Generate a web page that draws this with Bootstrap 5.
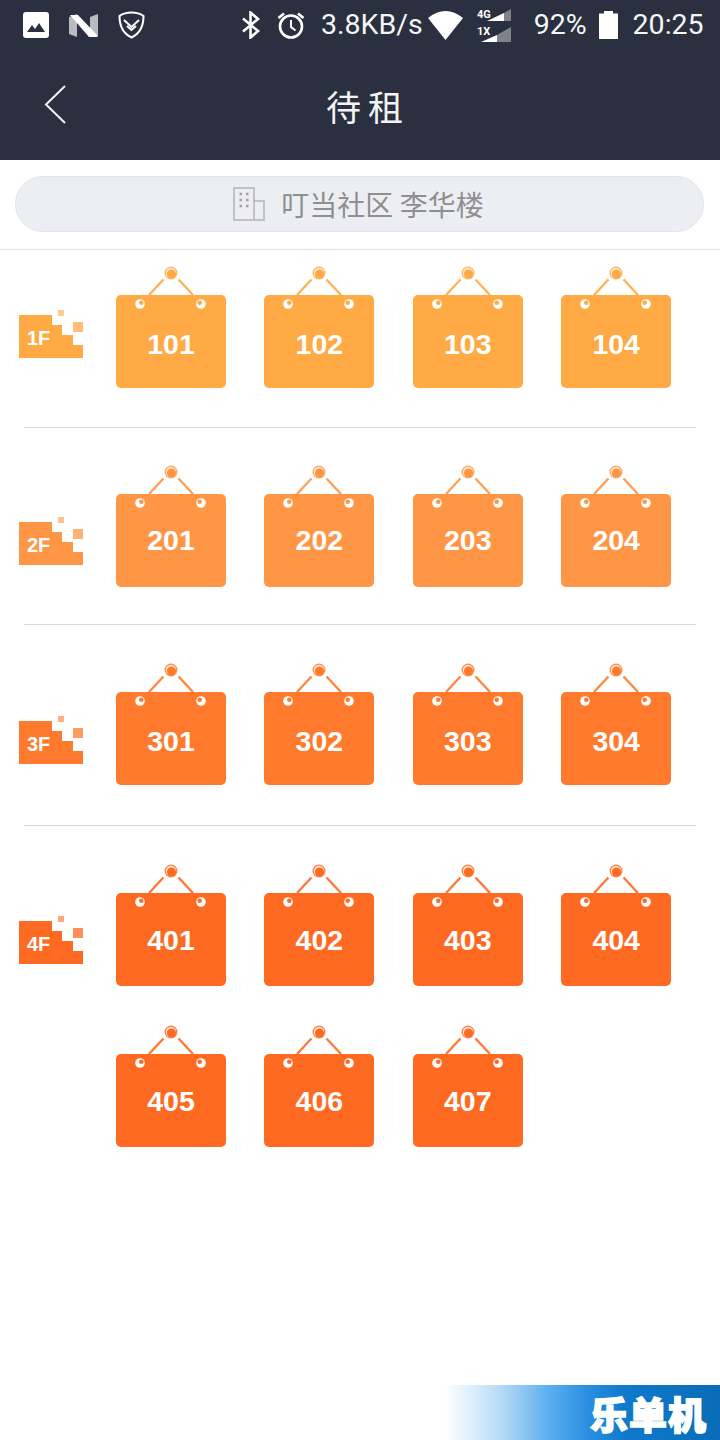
<!DOCTYPE html>
<html lang="zh">
<head>
<meta charset="utf-8">
<title>待租</title>
<link href="https://cdn.jsdelivr.net/npm/bootstrap@5.3.0/dist/css/bootstrap.min.css" rel="stylesheet">
<style>
html,body{margin:0;background:#fff}
.screen{width:720px;height:1440px;overflow:hidden;font-family:"Liberation Sans","Noto Sans CJK SC",sans-serif}
.topbar{height:160px;background:#2a3040;color:#fff}
.statusrow{height:50px;padding-left:23px;font-family:Roboto,sans-serif;font-size:28.5px;line-height:50px;color:#f6f6f6}
.statusrow svg{flex:none;display:block}
.s1{margin-left:20px}.s2{margin-left:20px}.s3{margin-left:96px}.s4{margin-left:16px}.s5{margin-left:16px}.s6{margin-left:5px}.s7{margin-left:14px}.s8{margin-left:22px}.s9{margin-left:12px}.s10{margin-left:15px}
.titlerow{height:110px}
.backbtn{margin-left:44px;margin-top:35px;display:block}
.pagetitle{position:absolute;left:0;right:0;top:78px;margin:0;padding-left:16px;text-align:center;font-family:"Noto Sans CJK SC",sans-serif;font-size:35px;line-height:56px;font-weight:400;letter-spacing:7px;color:#f4f4f4}
.searchwrap{height:90px;padding:16px 16px 0 15px;border-bottom:1px solid #e2e2e2}
.searchpill{height:56px;background:#eceef2;border:1px solid #e2e4e8;border-radius:28px;font-family:"Noto Sans CJK SC",sans-serif;font-size:28px;color:#8f8f92;padding-right:2px}
.searchpill svg{margin-right:16px}
.floorrow{margin:0 24px 0 19px;display:flex;align-items:flex-start}
.rule{height:1px;background:#d9d9d9;margin:0 24px}
.f1{padding:16px 0 39px;color:#ffaa45}
.f2{padding:37px 0 37px;color:#ff9646}
.f3{padding:38px 0 40px;color:#ff7a2c}
.f4{padding:38px 0 0;color:#ff6a23}
.flooricon{display:block;flex:none;margin-right:33px}
.f1 .flooricon{margin-top:44px}
.f2 .flooricon{margin-top:52px}
.f3 .flooricon{margin-top:53px}
.f4 .flooricon{margin-top:52px}
.taggrid{display:flex;flex-wrap:wrap;column-gap:38.4px;row-gap:39px;width:560px}
.roomtag{position:relative;width:110px;height:122px}
.roomtag svg{position:absolute;left:0;top:0}
.tagbody{margin-top:29px;height:93px;width:110px;display:inline-flex;background:currentColor;border-radius:5px;align-items:center;justify-content:center;vertical-align:top}
.tagnum{color:#fff;font-size:28.500px;font-weight:700;line-height:32px;padding-top:5px}
.f2 .tagnum{padding-top:0;padding-bottom:1px}
.f3 .tagnum{padding-top:4px}
.f4 .tagnum{padding-top:1px}
.floorlabel{font-family:"Liberation Sans",sans-serif;font-size:20px;font-weight:700;fill:#fff}
.watermark{height:55px;width:275px;background:linear-gradient(90deg,#fff 0%,#b8dcf7 20%,#5aaeee 38%,#2a8fe0 52%,#0f7acb 65%,#0a6cb8 100%);color:#fff;font-family:"Noto Sans CJK SC",sans-serif;font-weight:900;font-size:38px;line-height:55px;letter-spacing:1px;text-align:right;padding-right:13px;-webkit-text-stroke:1.5px #fff}
</style>
</head>
<body>
<svg width="0" height="0" class="d-block" aria-hidden="true">
<defs>
<symbol id="hang" viewBox="0 0 110 122">
<path d="M33 29 47.500 13.500M62.500 13.500 77 29" fill="none" stroke="currentColor" stroke-width="2.400" opacity=".9"/>
<circle cx="55" cy="7" r="6.500" fill="currentColor" opacity=".85"/>
<circle cx="55" cy="7" r="5.200" fill="#ffe9d2"/>
<circle cx="55.500" cy="8" r="4.600" fill="currentColor"/>
<circle cx="24" cy="38" r="4.800" fill="#fff"/><circle cx="25.300" cy="36.800" r="2.300" fill="currentColor"/>
<circle cx="85" cy="38" r="4.800" fill="#fff"/><circle cx="83.700" cy="36.800" r="2.300" fill="currentColor"/>
</symbol>
<symbol id="stairs" viewBox="0 0 64 48">
<path d="M0 5H33V15H43V25H54V35H64V48H0z" fill="currentColor"/>
<rect x="39" y="0" width="6" height="6" fill="currentColor" opacity=".6"/>
<rect x="54" y="12" width="10" height="10" fill="currentColor" opacity=".75"/>
</symbol>
</defs>
</svg>
<div class="screen d-flex flex-column">
  <header class="topbar position-relative">
    <div class="statusrow d-flex align-items-center">
      <svg width="26" height="26" viewBox="0 0 26 26"><rect width="26" height="26" rx="3" fill="#fff"/><path d="M4 20 9 13l3 4 4-6 6 9z" fill="#2a3040"/></svg>
      <svg class="s1" width="29" height="24" viewBox="0 0 29 24"><path d="M0 4 8 1V24L0 21z" fill="#b9bbbe"/><path d="M21 4 29 1V24L21 21z" fill="#b9bbbe"/><path d="M1 2H9L28 22V24H20z" fill="#fff"/></svg>
      <svg class="s2" width="27" height="28" viewBox="0 0 27 28"><path d="M13.500 1.500C9 1.500 5 2.500 1.500 5 1.500 15 5 22.500 13.500 26.500 22 22.500 25.500 15 25.500 5 22 2.500 18 1.500 13.500 1.500z" fill="none" stroke="#fff" stroke-width="2"/><path d="M6 9 13.500 16 21 9M9 15l4.500 4 4.500-4" fill="none" stroke="#fff" stroke-width="2"/></svg>
      <svg class="s3" width="20" height="28" viewBox="0 0 20 28"><path d="M2 7.500 17 20 9.500 26.500V1.500L17 8 2 20.500" fill="none" stroke="#fff" stroke-width="2.600"/></svg>
      <svg class="s4" width="28" height="28" viewBox="0 0 28 28"><circle cx="14" cy="15.500" r="11" fill="none" stroke="#fff" stroke-width="2.600"/><path d="M14 9v7l4.500 3.500" fill="none" stroke="#fff" stroke-width="2"/><path d="M1.500 7 7 2.500M26.500 7 21 2.500" stroke="#fff" stroke-width="2.600" fill="none"/></svg>
      <span class="s5">3.8KB/s</span>
      <svg class="s6" width="35" height="29" viewBox="0 0 35 29"><path d="M0 7Q17.500-7 35 7L17.500 29z" fill="#fff"/></svg>
      <svg class="s7" width="35" height="33" viewBox="0 0 35 33"><path d="M27 4 34 0V12H27z" fill="#fff" opacity=".4"/><path d="M10 12 27 4V12z" fill="#fff"/><path d="M20 26 34 18V33H20z" fill="#fff" opacity=".4"/><path d="M4 33 20 26V33z" fill="#fff"/><text x="0" y="9" font-family="Roboto,sans-serif" font-size="11" font-weight="700" fill="#fff">4G</text><text x="0" y="26" font-family="Roboto,sans-serif" font-size="11" font-weight="700" fill="#fff">1X</text></svg>
      <span class="s8">92%</span>
      <svg class="s9" width="19" height="28" viewBox="0 0 19 28"><path d="M5 0H14V2.500H19V28H0V2.500H5z" fill="#fff"/></svg>
      <span class="s10">20:25</span>
    </div>
    <div class="titlerow">
      <svg class="backbtn" width="22" height="40" viewBox="0 0 22 40"><path d="M21 1 2 19.500 21 38" fill="none" stroke="#f4f4f4" stroke-width="2"/></svg>
    </div>
    <h1 class="pagetitle">待租</h1>
  </header>
  <div class="searchwrap">
    <div class="searchpill d-flex align-items-center justify-content-center">
      <svg width="32" height="34" viewBox="0 0 32 34"><path d="M1 1H21V33H1zM21 14H31V33H21z" fill="none" stroke="#b4b4b6" stroke-width="1.500"/><path d="M6.500 7h2.500M13 7h2.500M6.500 13h2.500M13 13h2.500M6.500 19h2.500M13 19h2.500" stroke="#a0a0a2" stroke-width="2.500"/></svg>
      <span>叮当社区 李华楼</span>
    </div>
  </div>
  <section class="floorrow f1">
    <svg class="flooricon" width="64" height="48" viewBox="0 0 64 48"><use href="#stairs"/><text class="floorlabel" x="8" y="35">1F</text></svg>
    <div class="taggrid">
      <div class="roomtag"><div class="tagbody"><span class="tagnum">101</span></div><svg width="110" height="122"><use href="#hang"/></svg></div>
      <div class="roomtag"><div class="tagbody"><span class="tagnum">102</span></div><svg width="110" height="122"><use href="#hang"/></svg></div>
      <div class="roomtag"><div class="tagbody"><span class="tagnum">103</span></div><svg width="110" height="122"><use href="#hang"/></svg></div>
      <div class="roomtag"><div class="tagbody"><span class="tagnum">104</span></div><svg width="110" height="122"><use href="#hang"/></svg></div>
    </div>
  </section>
  <div class="rule"></div>
  <section class="floorrow f2">
    <svg class="flooricon" width="64" height="48" viewBox="0 0 64 48"><use href="#stairs"/><text class="floorlabel" x="8" y="35">2F</text></svg>
    <div class="taggrid">
      <div class="roomtag"><div class="tagbody"><span class="tagnum">201</span></div><svg width="110" height="122"><use href="#hang"/></svg></div>
      <div class="roomtag"><div class="tagbody"><span class="tagnum">202</span></div><svg width="110" height="122"><use href="#hang"/></svg></div>
      <div class="roomtag"><div class="tagbody"><span class="tagnum">203</span></div><svg width="110" height="122"><use href="#hang"/></svg></div>
      <div class="roomtag"><div class="tagbody"><span class="tagnum">204</span></div><svg width="110" height="122"><use href="#hang"/></svg></div>
    </div>
  </section>
  <div class="rule"></div>
  <section class="floorrow f3">
    <svg class="flooricon" width="64" height="48" viewBox="0 0 64 48"><use href="#stairs"/><text class="floorlabel" x="8" y="35">3F</text></svg>
    <div class="taggrid">
      <div class="roomtag"><div class="tagbody"><span class="tagnum">301</span></div><svg width="110" height="122"><use href="#hang"/></svg></div>
      <div class="roomtag"><div class="tagbody"><span class="tagnum">302</span></div><svg width="110" height="122"><use href="#hang"/></svg></div>
      <div class="roomtag"><div class="tagbody"><span class="tagnum">303</span></div><svg width="110" height="122"><use href="#hang"/></svg></div>
      <div class="roomtag"><div class="tagbody"><span class="tagnum">304</span></div><svg width="110" height="122"><use href="#hang"/></svg></div>
    </div>
  </section>
  <div class="rule"></div>
  <section class="floorrow f4">
    <svg class="flooricon" width="64" height="48" viewBox="0 0 64 48"><use href="#stairs"/><text class="floorlabel" x="8" y="35">4F</text></svg>
    <div class="taggrid">
      <div class="roomtag"><div class="tagbody"><span class="tagnum">401</span></div><svg width="110" height="122"><use href="#hang"/></svg></div>
      <div class="roomtag"><div class="tagbody"><span class="tagnum">402</span></div><svg width="110" height="122"><use href="#hang"/></svg></div>
      <div class="roomtag"><div class="tagbody"><span class="tagnum">403</span></div><svg width="110" height="122"><use href="#hang"/></svg></div>
      <div class="roomtag"><div class="tagbody"><span class="tagnum">404</span></div><svg width="110" height="122"><use href="#hang"/></svg></div>
      <div class="roomtag"><div class="tagbody"><span class="tagnum">405</span></div><svg width="110" height="122"><use href="#hang"/></svg></div>
      <div class="roomtag"><div class="tagbody"><span class="tagnum">406</span></div><svg width="110" height="122"><use href="#hang"/></svg></div>
      <div class="roomtag"><div class="tagbody"><span class="tagnum">407</span></div><svg width="110" height="122"><use href="#hang"/></svg></div>
    </div>
  </section>
  <div class="watermark mt-auto ms-auto">乐单机</div>
</div>
<script src="https://cdn.jsdelivr.net/npm/bootstrap@5.3.0/dist/js/bootstrap.bundle.min.js"></script>
</body>
</html>
